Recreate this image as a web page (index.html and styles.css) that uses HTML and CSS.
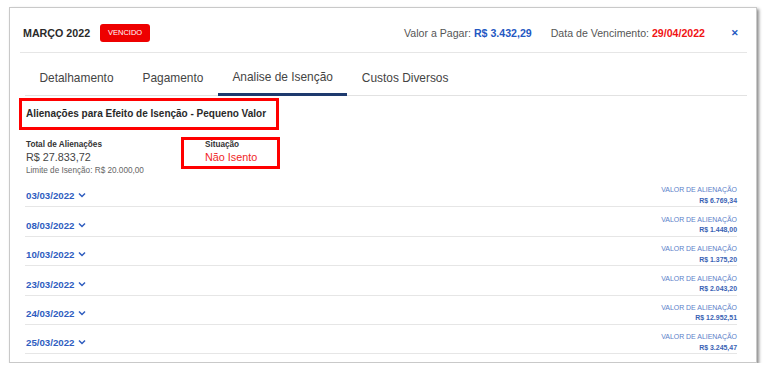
FILE: index.html
```html
<!DOCTYPE html>
<html>

<head>
    <meta charset="UTF-8">
    <title>Analise de Isenção</title>
    <link rel="stylesheet" href="styles.css">
</head>

<body>
    <div class="card">
        <div class="header">
            <div class="header-left">
                <span class="mes">MARÇO 2022</span>
                <span class="badge">VENCIDO</span>
            </div>
            <div class="header-right">
                <span class="info">Valor a Pagar: <b class="azul">R$ 3.432,29</b></span>
                <span class="info">Data de Vencimento: <b class="vermelho">29/04/2022</b></span>
                <span class="fechar">&#x2715;</span>
            </div>
        </div>

        <div class="tabs">
            <div class="tab">Detalhamento</div>
            <div class="tab">Pagamento</div>
            <div class="tab ativo">Analise de Isenção</div>
            <div class="tab">Custos Diversos</div>
        </div>

        <div class="conteudo">
            <div class="titulo marcado">Alienações para Efeito de Isenção - Pequeno Valor</div>

            <div class="resumo">
                <div class="total">
                    <div class="rotulo">Total de Alienações</div>
                    <div class="valor">R$ 27.833,72</div>
                    <div class="limite">Limite de Isenção: R$ 20.000,00</div>
                </div>
                <div class="situacao marcado">
                    <div class="rotulo">Situação</div>
                    <div class="valor vermelho-claro">Não Isento</div>
                </div>
            </div>

            <ul class="lista">
                <li class="linha">
                    <span class="data">03/03/2022 <svg width="8" height="6" viewBox="0 0 8 6"><path d="M1 1.5 L4 4.5 L7 1.5" fill="none" stroke="#2f5dbf" stroke-width="1.5"/></svg></span>
                    <div class="alienacao">
                        <div>VALOR DE ALIENAÇÃO</div>
                        <div class="montante">R$ 6.769,34</div>
                    </div>
                </li>
                <li class="linha">
                    <span class="data">08/03/2022 <svg width="8" height="6" viewBox="0 0 8 6"><path d="M1 1.5 L4 4.5 L7 1.5" fill="none" stroke="#2f5dbf" stroke-width="1.5"/></svg></span>
                    <div class="alienacao">
                        <div>VALOR DE ALIENAÇÃO</div>
                        <div class="montante">R$ 1.448,00</div>
                    </div>
                </li>
                <li class="linha">
                    <span class="data">10/03/2022 <svg width="8" height="6" viewBox="0 0 8 6"><path d="M1 1.5 L4 4.5 L7 1.5" fill="none" stroke="#2f5dbf" stroke-width="1.5"/></svg></span>
                    <div class="alienacao">
                        <div>VALOR DE ALIENAÇÃO</div>
                        <div class="montante">R$ 1.375,20</div>
                    </div>
                </li>
                <li class="linha">
                    <span class="data">23/03/2022 <svg width="8" height="6" viewBox="0 0 8 6"><path d="M1 1.5 L4 4.5 L7 1.5" fill="none" stroke="#2f5dbf" stroke-width="1.5"/></svg></span>
                    <div class="alienacao">
                        <div>VALOR DE ALIENAÇÃO</div>
                        <div class="montante">R$ 2.043,20</div>
                    </div>
                </li>
                <li class="linha">
                    <span class="data">24/03/2022 <svg width="8" height="6" viewBox="0 0 8 6"><path d="M1 1.5 L4 4.5 L7 1.5" fill="none" stroke="#2f5dbf" stroke-width="1.5"/></svg></span>
                    <div class="alienacao">
                        <div>VALOR DE ALIENAÇÃO</div>
                        <div class="montante">R$ 12.952,51</div>
                    </div>
                </li>
                <li class="linha">
                    <span class="data">25/03/2022 <svg width="8" height="6" viewBox="0 0 8 6"><path d="M1 1.5 L4 4.5 L7 1.5" fill="none" stroke="#2f5dbf" stroke-width="1.5"/></svg></span>
                    <div class="alienacao">
                        <div>VALOR DE ALIENAÇÃO</div>
                        <div class="montante">R$ 3.245,47</div>
                    </div>
                </li>
            </ul>
        </div>
    </div>
</body>

</html>
```

FILE: styles.css
```css
body {
    margin: 0;
    background-color: #fff;
    font-family: "Liberation Sans", Arial, sans-serif;
    color: #222;
}

.card {
    box-sizing: border-box;
    width: 748px;
    height: 356px;
    margin: 7px 0 0 9px;
    padding: 0 9px 0 10px;
    border: 1px solid #c9c9c9;
    box-shadow: 2px 2px 3px rgba(0, 0, 0, 0.45);
    overflow: hidden;
}

/* cabeçalho */
.header {
    display: flex;
    justify-content: space-between;
    align-items: center;
    padding: 16px 8px 10px 3px;
    border-bottom: 1px solid #e6e6e6;
}

.header-left {
    display: flex;
    align-items: center;
    gap: 10px;
}

.mes {
    font-size: 10.7px;
    font-weight: bold;
    color: #2a2a2a;
}

.badge {
    display: inline-block;
    width: 50px;
    height: 18px;
    line-height: 18px;
    text-align: center;
    border-radius: 3px;
    background-color: #ee0000;
    color: #fff;
    font-size: 7.5px;
}

.header-right {
    display: flex;
    align-items: center;
    font-size: 10.6px;
    color: #555;
}

.info {
    margin-right: 19px;
}

.azul {
    color: #2458c2;
}

.vermelho {
    color: #f01414;
}

.fechar {
    margin-left: 7px;
    font-size: 9px;
    font-weight: bold;
    color: #2458c2;
}

/* abas */
.tabs {
    display: flex;
    margin-left: 5px;
    height: 42px;
    border-bottom: 1px solid #e2e2e2;
}

.tab {
    padding: 0 14.5px;
    line-height: 50px;
    font-size: 11.9px;
    color: #444;
}

.ativo {
    border-bottom: 3px solid #1e3a6e;
    margin-bottom: -1px;
    line-height: 49px;
}

/* conteúdo */
.conteudo {
    margin: 0 10px 0 5px;
}

.marcado {
    box-sizing: border-box;
    border: 3px solid #ff0000;
}

.titulo {
    width: 260px;
    height: 32px;
    margin: 2px 0 0 -6px;
    padding-left: 4px;
    line-height: 25px;
    font-size: 10px;
    font-weight: bold;
    color: #2a2a2a;
}

.resumo {
    display: flex;
    margin-top: 7px;
}

.total {
    width: 155px;
    padding: 3px 0 0 1px;
}

.rotulo {
    line-height: 10px;
    font-size: 8.2px;
    font-weight: bold;
    color: #333;
}

.valor {
    line-height: 15px;
    font-size: 10.8px;
    color: #444;
}

.limite {
    line-height: 11px;
    font-size: 8.2px;
    color: #666;
}

.situacao {
    width: 99px;
    height: 32px;
    padding-left: 21px;
}

.vermelho-claro {
    color: #f02626;
}

/* lista de datas */
.lista {
    list-style-type: none;
    margin: 2px 0 0;
    padding: 0;
}

.linha {
    display: flex;
    justify-content: space-between;
    align-items: flex-end;
    height: 28.4px;
    border-bottom: 1px solid #e6e6e6;
}

.data {
    padding-left: 1px;
    line-height: 21px;
    font-size: 9.7px;
    font-weight: bold;
    color: #2f5dbf;
}

.data svg {
    margin-left: 1px;
    vertical-align: 1px;
}

.alienacao {
    text-align: right;
    font-size: 6.95px;
    line-height: 10.5px;
    color: #5b80c9;
}

.montante {
    font-weight: bold;
    color: #3a62b4;
}
```
